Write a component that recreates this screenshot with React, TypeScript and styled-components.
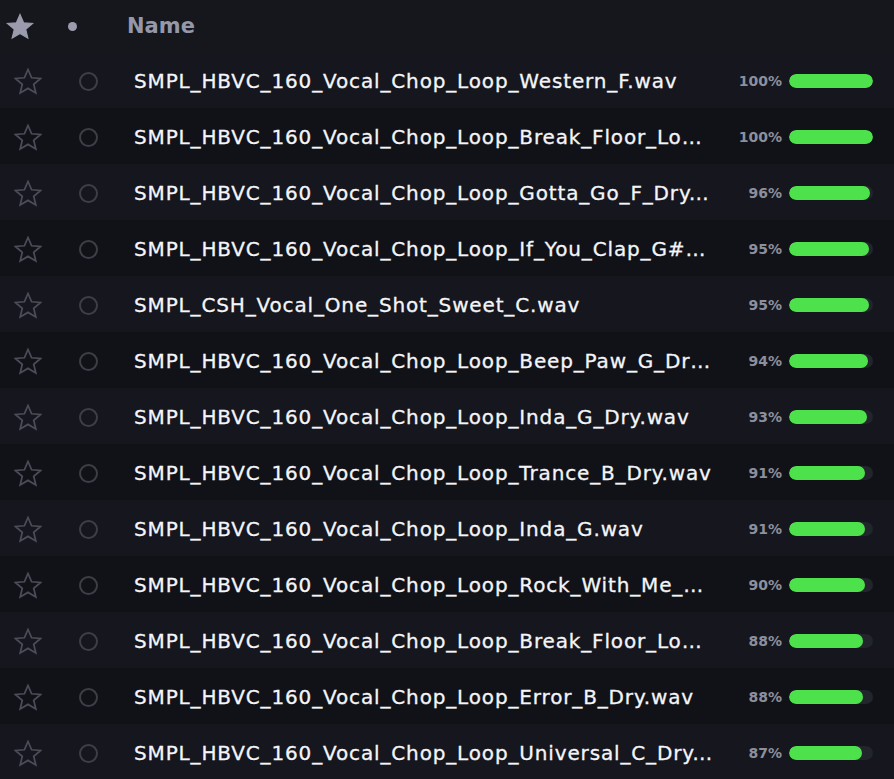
import React from "react";
import styled, { createGlobalStyle } from "styled-components";

const Global = createGlobalStyle`
  html, body { margin: 0; padding: 0; background: #121319; }
  body { font-family: "DejaVu Sans", "Noto Sans", sans-serif; }
`;

const List = styled.div`
  width: 894px;
  background: #121319;
`;

const Header = styled.div`
  display: flex;
  align-items: center;
  height: 52px;
  background: #15171c;
`;

const HeaderStar = styled.div`
  width: 40px;
  display: flex;
  justify-content: center;
  color: #9a9cad;
`;

const HeaderDot = styled.div`
  width: 64px;
  display: flex;
  justify-content: center;
`;

const Dot = styled.span`
  width: 9px;
  height: 9px;
  border-radius: 50%;
  background: #9a9cad;
`;

const HeaderTitle = styled.div`
  padding-left: 23px;
  font-family: "DejaVu Sans", sans-serif;
  font-weight: 700;
  font-size: 21px;
  color: #9498aa;
`;

const Row = styled.div<{ $alt: boolean }>`
  display: flex;
  align-items: center;
  height: 56px;
  padding-top: 2px;
  box-sizing: border-box;
  background: ${(p) => (p.$alt ? "#111218" : "#15161e")};
`;

const StarCell = styled.div`
  width: 56px;
  display: flex;
  justify-content: center;
  color: #4a4c57;
`;

const CircleCell = styled.div`
  width: 64px;
  display: flex;
  justify-content: center;
`;

const Ring = styled.span`
  width: 15px;
  height: 15px;
  border-radius: 50%;
  border: 2px solid #3d3f48;
`;

const NameCell = styled.div`
  flex: 1;
  min-width: 0;
  padding-left: 14px;
  padding-right: 9px;
  font-family: "DejaVu Sans", sans-serif;
  font-weight: 400;
  font-size: 20px;
  letter-spacing: 0.85px;
  color: #f4f5f8;
  white-space: nowrap;
  overflow: hidden;
  text-overflow: ellipsis;
  -webkit-text-stroke: 0.3px #f4f5f8;
`;

const Pct = styled.div`
  width: 60px;
  text-align: right;
  font-family: "DejaVu Sans", sans-serif;
  font-weight: 700;
  font-size: 14px;
  color: #8c8f9c;
`;

const Track = styled.div`
  width: 84px;
  height: 14px;
  margin-left: 7px;
  margin-right: 21px;
  border-radius: 7px;
  background: #23252d;
  overflow: hidden;
`;

const Fill = styled.div`
  height: 100%;
  border-radius: 7px;
  background: #4de24c;
`;

const StarIcon = ({ filled }: { filled?: boolean }) => (
  <svg width="28" height="27" viewBox="0 0 24 23">
    <path
      d="M12 1.2l3.1 7.1 7.7.6-5.9 5 1.8 7.5L12 17.4l-6.7 4 1.8-7.5-5.9-5 7.7-.6z"
      fill={filled ? "currentColor" : "none"}
      stroke="currentColor"
      strokeWidth={filled ? 1 : 1.5}
      strokeLinejoin="miter"
    />
  </svg>
);

const rows: [string, number][] = [
  ["SMPL_HBVC_160_Vocal_Chop_Loop_Western_F.wav", 100],
  ["SMPL_HBVC_160_Vocal_Chop_Loop_Break_Floor_Loop_F.wav", 100],
  ["SMPL_HBVC_160_Vocal_Chop_Loop_Gotta_Go_F_Dry.wav", 96],
  ["SMPL_HBVC_160_Vocal_Chop_Loop_If_You_Clap_G#_Dry.wav", 95],
  ["SMPL_CSH_Vocal_One_Shot_Sweet_C.wav", 95],
  ["SMPL_HBVC_160_Vocal_Chop_Loop_Beep_Paw_G_Dry.wav", 94],
  ["SMPL_HBVC_160_Vocal_Chop_Loop_Inda_G_Dry.wav", 93],
  ["SMPL_HBVC_160_Vocal_Chop_Loop_Trance_B_Dry.wav", 91],
  ["SMPL_HBVC_160_Vocal_Chop_Loop_Inda_G.wav", 91],
  ["SMPL_HBVC_160_Vocal_Chop_Loop_Rock_With_Me_G.wav", 90],
  ["SMPL_HBVC_160_Vocal_Chop_Loop_Break_Floor_Loop_F_Dry.wav", 88],
  ["SMPL_HBVC_160_Vocal_Chop_Loop_Error_B_Dry.wav", 88],
  ["SMPL_HBVC_160_Vocal_Chop_Loop_Universal_C_Dry.wav", 87],
];

export default function App() {
  return (
    <>
      <Global />
      <List>
        <Header>
          <HeaderStar>
            <StarIcon filled />
          </HeaderStar>
          <HeaderDot>
            <Dot />
          </HeaderDot>
          <HeaderTitle>Name</HeaderTitle>
        </Header>
        {rows.map(([name, pct], i) => (
          <Row key={i} $alt={i % 2 === 1}>
            <StarCell>
              <StarIcon />
            </StarCell>
            <CircleCell>
              <Ring />
            </CircleCell>
            <NameCell title={name}>{name}</NameCell>
            <Pct>{pct}%</Pct>
            <Track>
              <Fill style={{ width: `${pct}%` }} />
            </Track>
          </Row>
        ))}
      </List>
    </>
  );
}
